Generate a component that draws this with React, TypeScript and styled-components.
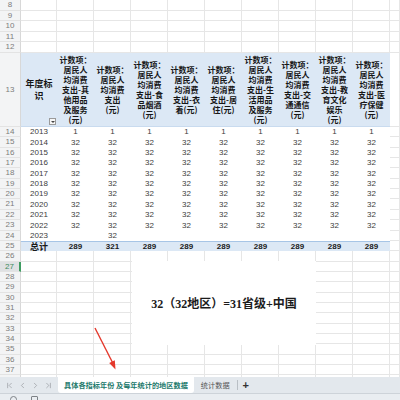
import React from 'react';
import styled, {createGlobalStyle, css} from 'styled-components';
import {ChevronFirst, ChevronLast, ChevronLeft, ChevronRight} from 'lucide-react';

const GlobalStyle = createGlobalStyle`
  html, body { margin: 0; padding: 0; background: #fff; overflow: hidden; }
  body { font-family: "Liberation Sans", "Noto Sans CJK SC", sans-serif; }
`;

const Window = styled.div`
  width: 400px;
  height: 400px;
  display: flex;
  flex-direction: column;
  overflow: hidden;
`;

const SheetArea = styled.div`
  position: relative;
  height: 377px;
  flex: none;
  overflow: hidden;
`;

const Grid = styled.div<{$rows: string}>`
  display: grid;
  grid-template-columns: 21px 36px repeat(9, 37px) 1fr;
  grid-template-rows: ${p => p.$rows};
`;

const RowHead = styled.div<{$active?: boolean}>`
  box-sizing: border-box;
  display: flex;
  align-items: center;
  justify-content: center;
  background: #f3f4f5;
  border-right: 1px solid #d8d8d8;
  border-bottom: 1px solid #e3e3e3;
  font-size: 8px;
  line-height: 1;
  color: #7c7c7c;
  ${p =>
    p.$active &&
    css`
      background: #dfe1e3;
      color: #3d8a5c;
      border-right: 2px solid #3f9c62;
    `}
`;

type Zone = 'grid' | 'pivot' | 'head' | 'total';

const Cell = styled.div<{$zone: Zone; $bold?: boolean}>`
  box-sizing: border-box;
  position: relative;
  min-width: 0;
  overflow: hidden;
  display: flex;
  align-items: center;
  justify-content: center;
  font-size: 8px;
  line-height: 1;
  color: #3c3c3c;
  font-weight: ${p => (p.$bold ? 700 : 400)};
  ${p =>
    p.$zone === 'grid' &&
    css`
      border-right: 1px solid #e6e6e6;
      border-bottom: 1px solid #e6e6e6;
    `}
  ${p =>
    p.$zone === 'pivot' &&
    css`
      background: #fff;
    `}
  ${p =>
    p.$zone === 'head' &&
    css`
      background: #dce8f5;
      border-bottom: 1px solid #c9dbef;
      color: #161616;
    `}
  ${p =>
    p.$zone === 'total' &&
    css`
      overflow: visible;
      background: #dce8f5;
      border-top: 1px solid #a7c5e6;
      color: #1a1a1a;
    `}
`;

const HeadText = styled.div<{$size?: number}>`
  display: flex;
  flex-direction: column;
  align-items: center;
  font-family: "Noto Sans CJK SC", sans-serif;
  font-weight: 700;
  font-size: ${p => p.$size ?? 8}px;
  line-height: ${p => (p.$size ? 12 : 10)}px;
  white-space: nowrap;
  text-align: center;
`;

const TotalLabel = styled.span`
  font-family: "Noto Sans CJK SC", sans-serif;
  font-size: 9px;
  line-height: 9px;
  font-weight: 700;
`;

const FilterButton = styled.div`
  position: absolute;
  right: 1px;
  bottom: 1px;
  width: 7px;
  height: 7px;
  box-sizing: border-box;
  border: 1px solid #9a9a9a;
  background: #f7f7f7;
  display: flex;
  align-items: center;
  justify-content: center;
  &::after {
    content: '';
    border-left: 2px solid transparent;
    border-right: 2px solid transparent;
    border-top: 2px solid #444;
  }
`;

const TextBox = styled.div`
  position: absolute;
  left: 132px;
  top: 261px;
  width: 184px;
  height: 84px;
  background: #fff;
  display: flex;
  align-items: center;
  justify-content: center;
  font-family: "Liberation Serif", "Noto Sans CJK SC", serif;
  font-weight: 700;
  font-size: 12px;
  color: #1c1c1c;
  white-space: nowrap;
`;

const Overlay = styled.svg`
  position: absolute;
  left: 0;
  top: 0;
  pointer-events: none;
`;

const TabBar = styled.div`
  height: 16px;
  flex: none;
  display: flex;
  align-items: center;
  background: #e3e8ed;
  border-bottom: 1px solid #cdd3d9;
`;

const NavGroup = styled.div`
  width: 58px;
  height: 16px;
  display: flex;
  align-items: center;
  justify-content: space-around;
  padding: 0 3px;
  box-sizing: border-box;
  color: #8b8f94;
`;

const Tab = styled.div<{$active?: boolean}>`
  height: 16px;
  display: flex;
  align-items: center;
  padding: 0 ${p => (p.$active ? 6 : 7)}px;
  font-family: "Noto Sans CJK SC", sans-serif;
  font-size: 7.2px;
  white-space: nowrap;
  color: ${p => (p.$active ? '#1d7a6c' : '#555')};
  font-weight: ${p => (p.$active ? 700 : 400)};
  background: ${p => (p.$active ? '#fff' : 'transparent')};
  border-radius: ${p => (p.$active ? '0 0 3px 3px' : '0')};
`;

const Divider = styled.div`
  width: 1px;
  height: 10px;
  background: #b9bfc5;
`;

const AddTab = styled.div`
  padding: 0 5px;
  font-size: 11px;
  font-weight: 700;
  color: #333;
  line-height: 16px;
`;

const StatusBar = styled.div`
  flex: 1;
  display: flex;
  align-items: flex-start;
  gap: 14px;
  padding: 2px 0 0 10px;
  background: #e9edf1;
`;

const StatusIcon = styled.div<{$round?: boolean}>`
  width: 7px;
  height: 8px;
  box-sizing: border-box;
  border: 1px solid #7d8287;
  border-radius: ${p => (p.$round ? '4px 4px 0 0' : '1px')};
`;

const headers: string[][] = [
  ['计数项：', '居民人', '均消费', '支出-其', '他用品', '及服务', '(元)'],
  ['计数项：', '居民人', '均消费', '支出', '(元)'],
  ['计数项：', '居民人', '均消费', '支出-食', '品烟酒', '(元)'],
  ['计数项：', '居民人', '均消费', '支出-衣', '着(元)'],
  ['计数项：', '居民人', '均消费', '支出-居', '住(元)'],
  ['计数项：', '居民人', '均消费', '支出-生', '活用品', '及服务', '(元)'],
  ['计数项：', '居民人', '均消费', '支出-交', '通通信', '(元)'],
  ['计数项：', '居民人', '均消费', '支出-教', '育文化', '娱乐', '(元)'],
  ['计数项：', '居民人', '均消费', '支出-医', '疗保健', '(元)'],
];

const years = [2013, 2014, 2015, 2016, 2017, 2018, 2019, 2020, 2021, 2022, 2023];
const totals = ['289', '321', '289', '289', '289', '289', '289', '289', '289'];

function rowValues(year: number): string[] {
  if (year === 2013) return Array(9).fill('1');
  if (year === 2023) return ['', '32', '', '', '', '', '', '', ''];
  return Array(9).fill('32');
}

function buildHeights(): number[] {
  const h: number[] = [];
  const tops: number[] = [];
  for (let i = 0; i <= 5; i++) tops.push(Math.round(i * 10.6));
  for (let i = 0; i < 5; i++) h.push(tops[i + 1] - tops[i]);
  h.push(74);
  const start = 127;
  for (let i = 0; i < 26; i++) {
    h.push(Math.round(start + (i + 1) * 10.35) - Math.round(start + i * 10.35));
  }
  return h;
}

const emptyRow = () => Array.from({length: 11}, (_, c) => <Cell key={c} $zone="grid" />);

export default function App() {
  const heights = buildHeights();
  const rows: React.ReactNode[] = [];

  for (let r = 8; r <= 12; r++) {
    rows.push(<RowHead key={`h${r}`}>{r}</RowHead>);
    rows.push(<React.Fragment key={`r${r}`}>{emptyRow()}</React.Fragment>);
  }

  rows.push(<RowHead key="h13">13</RowHead>);
  rows.push(
    <Cell key="a13" $zone="head">
      <HeadText $size={9}>
        <span>年度标</span>
        <span>识</span>
      </HeadText>
      <FilterButton />
    </Cell>,
  );
  headers.forEach((lines, i) =>
    rows.push(
      <Cell key={`c13-${i}`} $zone="head">
        <HeadText>
          {lines.map(l => (
            <span key={l}>{l}</span>
          ))}
        </HeadText>
      </Cell>,
    ),
  );
  rows.push(<Cell key="k13" $zone="grid" />);

  years.forEach((y, i) => {
    const r = 14 + i;
    rows.push(<RowHead key={`h${r}`}>{r}</RowHead>);
    rows.push(<Cell key={`a${r}`} $zone="pivot">{y}</Cell>);
    rowValues(y).forEach((v, c) =>
      rows.push(
        <Cell key={`v${r}-${c}`} $zone="pivot">
          {v}
        </Cell>,
      ),
    );
    rows.push(<Cell key={`k${r}`} $zone="grid" />);
  });

  rows.push(<RowHead key="h25">25</RowHead>);
  rows.push(
    <Cell key="a25" $zone="total" $bold>
      <TotalLabel>总计</TotalLabel>
    </Cell>,
  );
  totals.forEach((t, c) =>
    rows.push(
      <Cell key={`t${c}`} $zone="total" $bold>
        {t}
      </Cell>,
    ),
  );
  rows.push(<Cell key="k25" $zone="grid" />);

  for (let r = 26; r <= 38; r++) {
    rows.push(
      <RowHead key={`h${r}`} $active={r === 27}>
        {r}
      </RowHead>,
    );
    rows.push(<React.Fragment key={`r${r}`}>{emptyRow()}</React.Fragment>);
  }

  return (
    <Window>
      <GlobalStyle />
      <SheetArea>
        <Grid $rows={heights.map(h => `${h}px`).join(' ')}>{rows}</Grid>
        <TextBox>32（32地区）=31省级+中国</TextBox>
        <Overlay width="400" height="377" viewBox="0 0 400 377">
          <line x1="95" y1="328" x2="112.5" y2="362.5" stroke="#e4382c" strokeWidth="1.4" />
          <polygon points="115.5,369.5 114.8,360.3 109.2,363.1" fill="#e4382c" />
        </Overlay>
      </SheetArea>
      <TabBar>
        <NavGroup>
          <ChevronFirst size={9} strokeWidth={1.6} />
          <ChevronLeft size={9} strokeWidth={1.6} />
          <ChevronRight size={9} strokeWidth={1.6} />
          <ChevronLast size={9} strokeWidth={1.6} />
        </NavGroup>
        <Tab $active>具体各指标年份 及每年统计的地区数据</Tab>
        <Tab>统计数据</Tab>
        <Divider />
        <AddTab>+</AddTab>
      </TabBar>
      <StatusBar>
        <StatusIcon $round />
        <StatusIcon />
      </StatusBar>
    </Window>
  );
}
